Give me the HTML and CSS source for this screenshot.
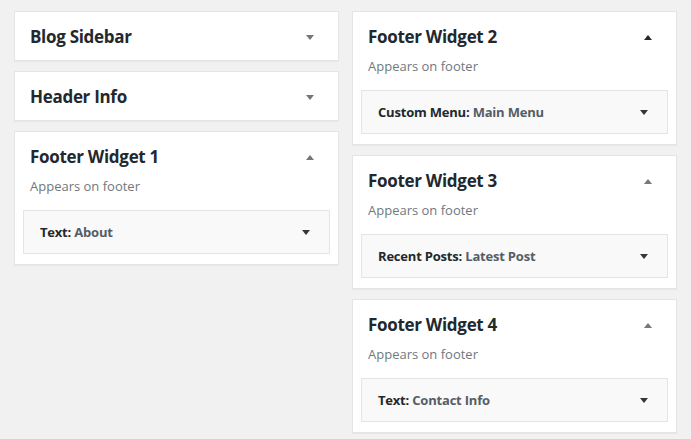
FILE: index.html
```html
<!DOCTYPE html>
<html lang="en">
<head>
    <meta charset="UTF-8">
    <meta name="viewport" content="width=device-width, initial-scale=1.0">
    <title>Widgets</title>

    <link rel="stylesheet" href="styles.css">
</head>
<body>
<div class="widgets">
    <div class="column">
        <div class="sidebar">
            <div class="sidebar-name">
                <h2>Blog Sidebar</h2>
                <span class="arrow down"></span>
            </div>
        </div>
        <div class="sidebar">
            <div class="sidebar-name">
                <h2>Header Info</h2>
                <span class="arrow down"></span>
            </div>
        </div>
        <div class="sidebar open">
            <div class="sidebar-name">
                <h2>Footer Widget 1</h2>
                <span class="arrow up"></span>
            </div>
            <p class="description">Appears on footer</p>
            <div class="widget">
                <h3>Text: <span class="in-title">About</span></h3>
                <span class="arrow down dark"></span>
            </div>
        </div>
    </div>

    <div class="column">
        <div class="sidebar open">
            <div class="sidebar-name">
                <h2>Footer Widget 2</h2>
                <span class="arrow up active"></span>
            </div>
            <p class="description">Appears on footer</p>
            <div class="widget">
                <h3>Custom Menu: <span class="in-title">Main Menu</span></h3>
                <span class="arrow down dark"></span>
            </div>
        </div>
        <div class="sidebar open">
            <div class="sidebar-name">
                <h2>Footer Widget 3</h2>
                <span class="arrow up"></span>
            </div>
            <p class="description">Appears on footer</p>
            <div class="widget">
                <h3>Recent Posts: <span class="in-title">Latest Post</span></h3>
                <span class="arrow down dark"></span>
            </div>
        </div>
        <div class="sidebar open">
            <div class="sidebar-name">
                <h2>Footer Widget 4</h2>
                <span class="arrow up"></span>
            </div>
            <p class="description">Appears on footer</p>
            <div class="widget">
                <h3>Text: <span class="in-title">Contact Info</span></h3>
                <span class="arrow down dark"></span>
            </div>
        </div>
    </div>
</div>
</body>
</html>
```

FILE: styles.css
```css
body {
    margin: 0;
    background-color: #f1f1f1;
    color: #23282d;
    font-family: "Open Sans", "Noto Sans", sans-serif;
}

.widgets {
    display: flex;
    gap: 13px;
    padding: 11px 14px;
}

.column {
    display: flex;
    flex-direction: column;
    gap: 10px;
    width: 326px;
}

.sidebar {
    background-color: #fff;
    border: 1px solid #e5e5e5;
    box-shadow: 0 1px 1px rgba(0, 0, 0, 0.04);
}

.sidebar.open {
    padding-bottom: 10px;
}

.sidebar-name {
    display: flex;
    align-items: center;
    justify-content: space-between;
    padding: 15px 24px 13px 15px;
}

.open .sidebar-name {
    padding-bottom: 0;
}

.sidebar-name h2 {
    margin: 0;
    font-size: 17px;
    font-weight: 700;
    line-height: 20px;
    letter-spacing: -0.3px;
}

.description {
    margin: 10px 15px 15px;
    font-size: 13px;
    line-height: 18px;
    color: #72777c;
}

.widget {
    display: flex;
    align-items: center;
    justify-content: space-between;
    height: 42px;
    margin: 0 8px;
    padding: 0 19px 0 16px;
    background-color: #f9f9f9;
    border: 1px solid #e5e5e5;
}

.widget h3 {
    margin: 0;
    font-size: 13px;
    font-weight: 700;
    line-height: 18px;
    letter-spacing: -0.2px;
    color: #23282d;
}

.in-title {
    color: #555d66;
}

.arrow {
    width: 0;
    height: 0;
    border-left: 4px solid transparent;
    border-right: 4px solid transparent;
}

.arrow.down {
    border-top: 5px solid #72777c;
}

.arrow.up {
    border-bottom: 5px solid #72777c;
}

.arrow.dark {
    border-top-color: #32373c;
}

.arrow.active {
    border-bottom-color: #23282d;
}
```
